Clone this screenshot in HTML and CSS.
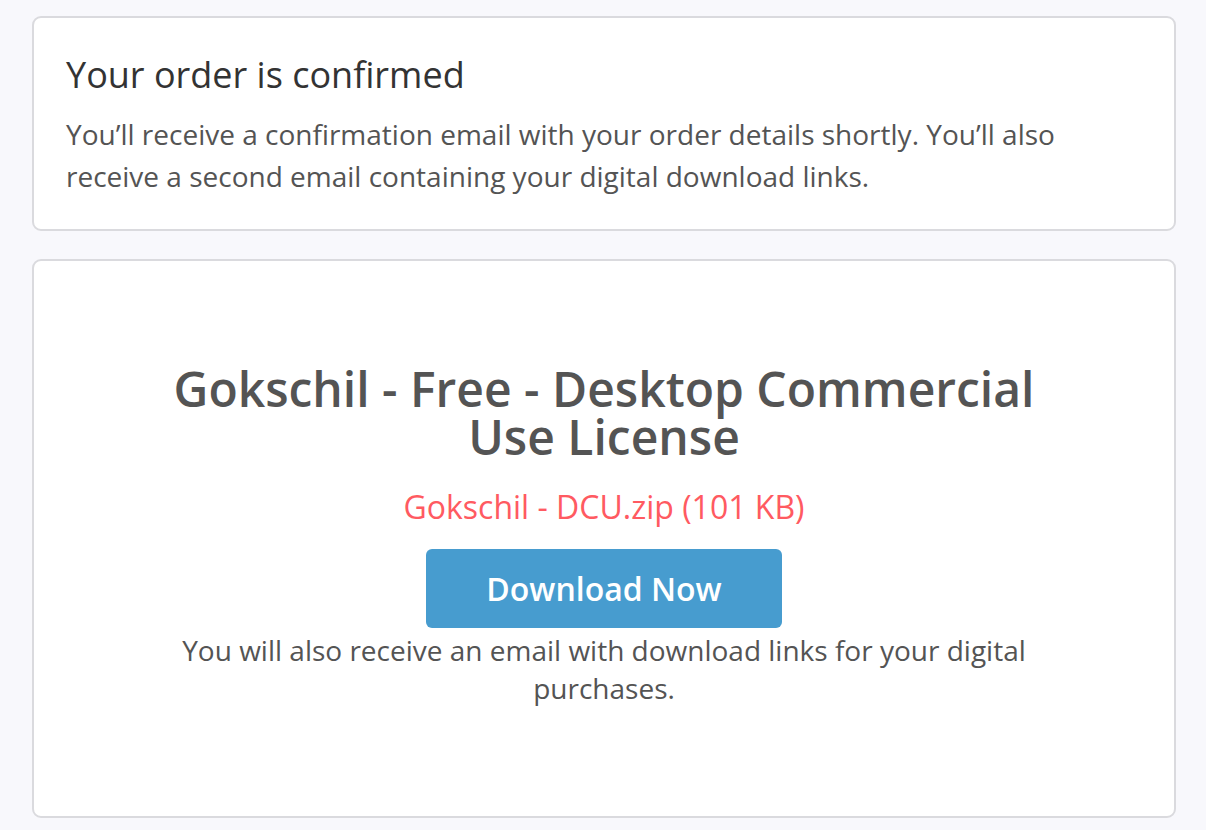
FILE: index.html
```html
<!DOCTYPE html>
<html lang="en">
<head>
<meta charset="utf-8">
<title>Order confirmed</title>
<link rel="stylesheet" href="styles.css">
</head>
<body>
<main class="page">
  <section class="card card-confirm">
    <h2 class="confirm-title">Your order is confirmed</h2>
    <p class="confirm-text">You’ll receive a confirmation email with your order details shortly. You’ll also receive a second email containing your digital download links.</p>
  </section>
  <section class="card card-download">
    <div class="download">
      <h1 class="product-title">Gokschil - Free - Desktop Commercial Use License</h1>
      <p class="file-name">Gokschil - DCU.zip (101 KB)</p>
      <a class="download-btn" href="#">Download Now</a>
      <p class="download-note">You will also receive an email with download links for your digital purchases.</p>
    </div>
  </section>
</main>
</body>
</html>
```

FILE: styles.css
```css
html, body {
  margin: 0;
  padding: 0;
  background: #f8f8fc;
}
body {
  font-family: "Open Sans", "Liberation Sans", sans-serif;
  color: #545454;
  width: 1206px;
  height: 830px;
  overflow: hidden;
}
.page {
  display: flex;
  flex-direction: column;
  gap: 28px;
  padding: 16px 30px 0 32px;
}
.card {
  background: #ffffff;
  border: 2px solid #dadade;
  border-radius: 9px;
  box-sizing: border-box;
  width: 1144px;
}
.card-confirm {
  height: 215px;
  padding: 32px 32px 32px 32px;
}
.confirm-title {
  margin: 0 0 14px;
  font-size: 36px;
  font-weight: 400;
  line-height: normal;
  color: #333333;
}
.confirm-text {
  margin: 0;
  font-size: 28px;
  line-height: 42px;
  color: #545454;
}
.card-download {
  height: 559px;
  padding-top: 104px;
  display: flex;
  justify-content: center;
}
.download {
  width: 880px;
  display: flex;
  flex-direction: column;
  align-items: center;
  text-align: center;
}
.product-title {
  margin: 0;
  font-size: 48px;
  font-weight: 600;
  line-height: 48px;
  color: #545454;
}
.file-name {
  margin: 24px 0 0;
  font-size: 32px;
  line-height: normal;
  color: #ff5a61;
}
.download-btn {
  margin-top: 21px;
  height: 79px;
  padding: 0 60px;
  box-sizing: border-box;
  display: flex;
  align-items: center;
  justify-content: center;
  background: #479ccf;
  color: #ffffff;
  border-radius: 6px;
  font-size: 32px;
  font-weight: 600;
  text-decoration: none;
}
.download-note {
  margin: 3px 0 0;
  font-size: 28px;
  line-height: normal;
  color: #545454;
}
```
